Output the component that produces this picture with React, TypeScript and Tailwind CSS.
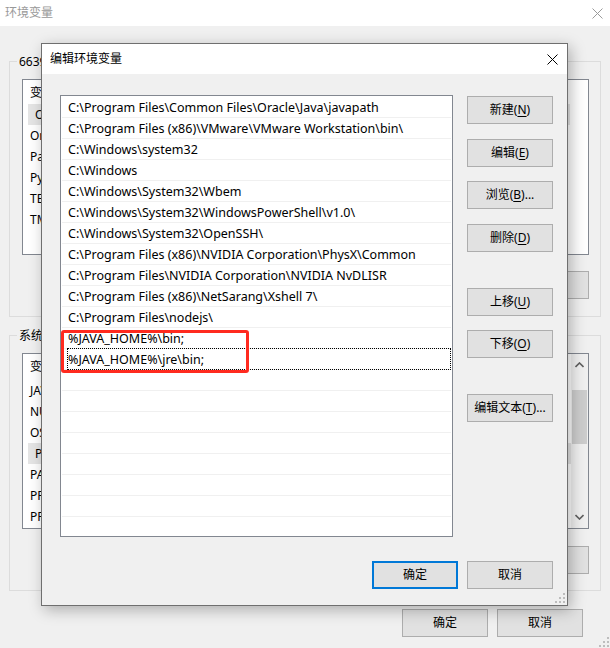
import React from 'react';

const paths = [
  'C:\\Program Files\\Common Files\\Oracle\\Java\\javapath',
  'C:\\Program Files (x86)\\VMware\\VMware Workstation\\bin\\',
  'C:\\Windows\\system32',
  'C:\\Windows',
  'C:\\Windows\\System32\\Wbem',
  'C:\\Windows\\System32\\WindowsPowerShell\\v1.0\\',
  'C:\\Windows\\System32\\OpenSSH\\',
  'C:\\Program Files (x86)\\NVIDIA Corporation\\PhysX\\Common',
  'C:\\Program Files\\NVIDIA Corporation\\NVIDIA NvDLISR',
  'C:\\Program Files (x86)\\NetSarang\\Xshell 7\\',
  'C:\\Program Files\\nodejs\\',
  '%JAVA_HOME%\\bin;',
  '%JAVA_HOME%\\jre\\bin;',
];

const userVars = ['OneDrive', 'OneDriveConsumer', 'Path', 'PyCharm', 'TEMP', 'TMP'];
const sysVars = ['JAVA_HOME', 'NUMBER_OF_PROCESSORS', 'OS', 'Path', 'PATHEXT', 'PROCESSOR_ARCHITECTURE', 'PROCESSOR_IDENTIFIER'];

function CloseIcon({ color }: { color: string }) {
  return (
    <svg width="11" height="11" viewBox="0 0 11 11">
      <path d="M0.5 0.5 L10.5 10.5 M10.5 0.5 L0.5 10.5" stroke={color} strokeWidth="1" />
    </svg>
  );
}

function Grip() {
  return (
    <svg width="10" height="10" viewBox="0 0 10 10">
      <rect x="8" y="0" width="2" height="2" fill="#bdbdbd" />
      <rect x="4" y="4" width="2" height="2" fill="#bdbdbd" />
      <rect x="8" y="4" width="2" height="2" fill="#bdbdbd" />
      <rect x="0" y="8" width="2" height="2" fill="#bdbdbd" />
      <rect x="4" y="8" width="2" height="2" fill="#bdbdbd" />
      <rect x="8" y="8" width="2" height="2" fill="#bdbdbd" />
    </svg>
  );
}

function Btn({
  text,
  hot,
  tail = '',
  focused = false,
  className = '',
}: {
  text: string;
  hot?: string;
  tail?: string;
  focused?: boolean;
  className?: string;
}) {
  return (
    <div
      className={`w-[86px] h-[28px] flex items-center justify-center bg-[#e1e1e1] text-[12px] text-black ${
        focused ? 'border-2 border-[#0078d7]' : 'border border-[#adadad]'
      } ${className}`}
    >
      <span>
        {text}
        {hot && (
          <>
            (<span className="underline underline-offset-2">{hot}</span>)
          </>
        )}
        {tail}
      </span>
    </div>
  );
}

export default function App() {
  return (
    <div className="w-[610px] h-[648px] relative overflow-hidden bg-[#f0f0f0] font-['Noto_Sans','Noto_Sans_CJK_SC',sans-serif] text-[12px] text-black">
      {/* background window: 环境变量 */}
      <div className="h-[26px] bg-white flex items-center justify-between pl-[5px] pr-[7px]">
        <span className="text-[#999999]">环境变量</span>
        <CloseIcon color="#9a9a9a" />
      </div>

      <div className="px-[9px]">
        <div className="mt-[35px] h-[256px] border border-[#dcdcdc] relative pl-[12px] pr-[11px]">
          <span className="absolute -top-[9px] left-[7px] bg-[#f0f0f0] px-[2px]">66391 的用户变量(U)</span>
          <div className="mt-[17px] h-[176px] bg-white border border-[#828790]">
            <div className="h-[24px] flex items-center pl-[7px] pt-[2px]">
              <span className="w-[120px]">变量</span>
              <span>值</span>
            </div>
            {userVars.map((v, i) => (
              <div
                key={v}
                className={`h-[21px] flex items-center pl-[7px] ${i === 0 ? 'bg-[#e5e5e5] ml-[5px] pl-[2px] mr-[18px]' : ''}`}
              >
                {v}
              </div>
            ))}
          </div>
          <div className="mt-[16px] flex justify-end gap-[9px]">
            <Btn text="新建" hot="N" tail="..." />
            <Btn text="编辑" hot="E" tail="..." />
            <Btn text="删除" hot="D" />
          </div>
        </div>

        <div className="mt-[18px] h-[256px] border border-[#dcdcdc] relative pl-[12px] pr-[11px]">
          <span className="absolute -top-[9px] left-[7px] bg-[#f0f0f0] px-[2px]">系统变量(S)</span>
          <div className="mt-[17px] h-[176px] bg-white border border-[#828790] flex">
            <div className="flex-1">
              <div className="h-[26px] flex items-center pl-[7px]">
                <span className="w-[120px]">变量</span>
                <span>值</span>
              </div>
              {sysVars.map((v, i) => (
                <div key={i} className={`h-[21px] flex items-center pl-[7px] ${i === 3 ? 'bg-[#e5e5e5] ml-[5px] pl-[2px]' : ''}`}>
                  {v}
                </div>
              ))}
            </div>
            <div className="w-[17px] bg-[#f0f0f0] flex flex-col items-center">
              <svg width="9" height="6" viewBox="0 0 9 6" className="mt-[8px]">
                <path d="M0.5 5 L4.5 1 L8.5 5" stroke="#606060" strokeWidth="1.6" fill="none" />
              </svg>
              <div className="mt-[22px] w-[15px] h-[54px] bg-[#cdcdcd]" />
              <svg width="9" height="6" viewBox="0 0 9 6" className="mt-auto mb-[8px]">
                <path d="M0.5 1 L4.5 5 L8.5 1" stroke="#606060" strokeWidth="1.6" fill="none" />
              </svg>
            </div>
          </div>
          <div className="mt-[17px] flex justify-end gap-[9px]">
            <Btn text="新建" hot="W" tail="..." />
            <Btn text="编辑" hot="I" tail="..." />
            <Btn text="删除" hot="L" />
          </div>
        </div>
      </div>

      <div className="mt-[18px] flex justify-end gap-[9px] pr-[27px]">
        <Btn text="确定" />
        <Btn text="取消" />
      </div>
      <div className="absolute right-[1px] bottom-[1px]">
        <Grip />
      </div>

      {/* foreground dialog: 编辑环境变量 */}
      <div className="absolute left-[41px] top-[43px] w-[527px] h-[563px] border border-[#6f6f6f] bg-[#f0f0f0] flex flex-col shadow-[3px_4px_14px_rgba(0,0,0,0.28)]">
        <div className="h-[30px] bg-white flex items-center justify-between pl-[8px] pr-[9px] shrink-0">
          <span>编辑环境变量</span>
          <CloseIcon color="#000000" />
        </div>
        <div className="flex-1 pt-[21px] pl-[18px] pr-[14px] relative">
          <div className="flex">
            <div className="w-[393px] h-[442px] bg-white border border-[#828790] pt-[1px] overflow-hidden relative">
              {Array.from({ length: 21 }).map((_, i) => (
                <div key={i} className="h-[21px] border-b border-[#f0f0f0] mx-[1px] relative">
                  <div className="h-[20px] leading-[21px] pl-[6px] whitespace-nowrap text-[12.5px]">{paths[i] ?? ''}</div>
                  {i === 12 && (
                    <div className="absolute left-[5px] right-0 -top-[1px] h-[22px] border border-dotted border-black" />
                  )}
                </div>
              ))}
              <div className="absolute left-0 top-[234px] w-[188px] h-[43px] border-[3px] border-[#ff2a1f] rounded-[3px]" />
            </div>
            <div className="ml-[14px] pt-[1px] flex flex-col">
              <Btn text="新建" hot="N" />
              <Btn text="编辑" hot="E" className="mt-[15px]" />
              <Btn text="浏览" hot="B" tail="..." className="mt-[14px]" />
              <Btn text="删除" hot="D" className="mt-[15px]" />
              <Btn text="上移" hot="U" className="mt-[36px]" />
              <Btn text="下移" hot="O" className="mt-[14px]" />
              <Btn text="编辑文本" hot="T" tail="..." className="mt-[36px]" />
            </div>
          </div>
          <div className="mt-[24px] flex justify-end gap-[9px]">
            <Btn text="确定" focused />
            <Btn text="取消" />
          </div>
          <div className="absolute right-[2px] bottom-[2px]">
            <Grip />
          </div>
        </div>
      </div>
    </div>
  );
}
